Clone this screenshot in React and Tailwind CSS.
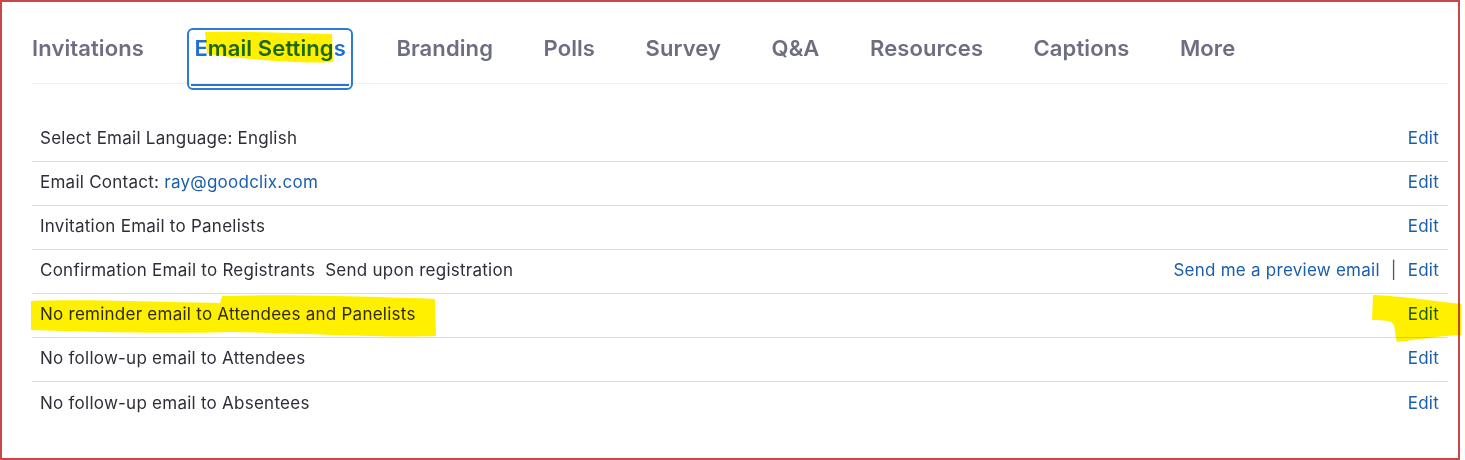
import React from 'react';

const tabs = ['Invitations', 'Email Settings', 'Branding', 'Polls', 'Survey', 'Q&A', 'Resources', 'Captions', 'More'];

const rows = [
  { label: 'Select Email Language: English' },
  { label: 'Email Contact: ', email: 'ray@goodclix.com' },
  { label: 'Invitation Email to Panelists' },
  { label: 'Confirmation Email to Registrants', extra: 'Send upon registration', preview: true },
  { label: 'No reminder email to Attendees and Panelists' },
  { label: 'No follow-up email to Attendees' },
  { label: 'No follow-up email to Absentees' },
];

// yellow marker strokes drawn over the screenshot
const Highlights = () => (
  <svg className="absolute left-0 top-0 pointer-events-none mix-blend-multiply" width="1465" height="460">
    <path d="M203 30 C240 29 290 31 330 32 L331 60 C300 62 250 58 205 52 Z" fill="#fff000" />
    <path d="M29 299 C80 297 150 300 218 301 L220 294 C280 292 380 295 433 297 L434 334 C380 336 300 331 230 330 C160 332 90 330 29 328 Z" fill="#fff000" />
    <path d="M1371 293 C1400 294 1430 299 1459 302 L1459 333 C1440 334 1420 337 1395 340 C1392 330 1394 322 1389 320 C1382 318 1374 318 1370 318 Z" fill="#fff000" />
  </svg>
);

export default function App() {
  return (
    <div className="relative w-[1460px] h-[460px] bg-white border-2 border-[#c84747] font-['Inter',sans-serif]">
      <div className="pl-[30px] pr-[10px]">
        <div className="border-b border-[#f0f0f3] h-[82px]">
          <div className="flex gap-[36.5px] -ml-[7px] pt-[26px]">
            {tabs.map((t, i) => (
              <div
                key={t}
                className={
                  i === 1
                    ? 'relative px-[5px] pt-[4px] h-[62px] border-2 border-[#2f7ad6] rounded-[6px] text-[#1d6fd4]'
                    : 'px-[7px] pt-[6px] h-[62px] text-[#6e6e83]'
                }
              >
                <span className="text-[22px] font-semibold leading-[28px] tracking-[0.1px]">{t}</span>
                {i === 1 && <div className="absolute left-[2px] right-[2px] bottom-[2px] h-[2px] bg-[#2a74d0]" />}
              </div>
            ))}
          </div>
        </div>

        <div className="mt-[34px] text-[17px] tracking-[0.25px] text-[#2e2e38]">
          {rows.map((r, i) => (
            <div
              key={i}
              className={
                'flex items-center justify-between h-[44px] pl-[8px] pr-[9px] pb-[1px] ' +
                (i < rows.length - 1 ? 'border-b border-[#dcdcdf]' : '')
              }
            >
              <div>
                {r.label}
                {r.email && <span className="text-[#1a5fab]">{r.email}</span>}
                {r.extra && <span className="ml-[10px]">{r.extra}</span>}
              </div>
              <div className="flex items-center text-[#1a5fab]">
                {r.preview && (
                  <>
                    <span>Send me a preview email</span>
                    <span className="mx-[11px] text-[#555]">|</span>
                  </>
                )}
                <span>Edit</span>
              </div>
            </div>
          ))}
        </div>
      </div>
      <Highlights />
    </div>
  );
}
